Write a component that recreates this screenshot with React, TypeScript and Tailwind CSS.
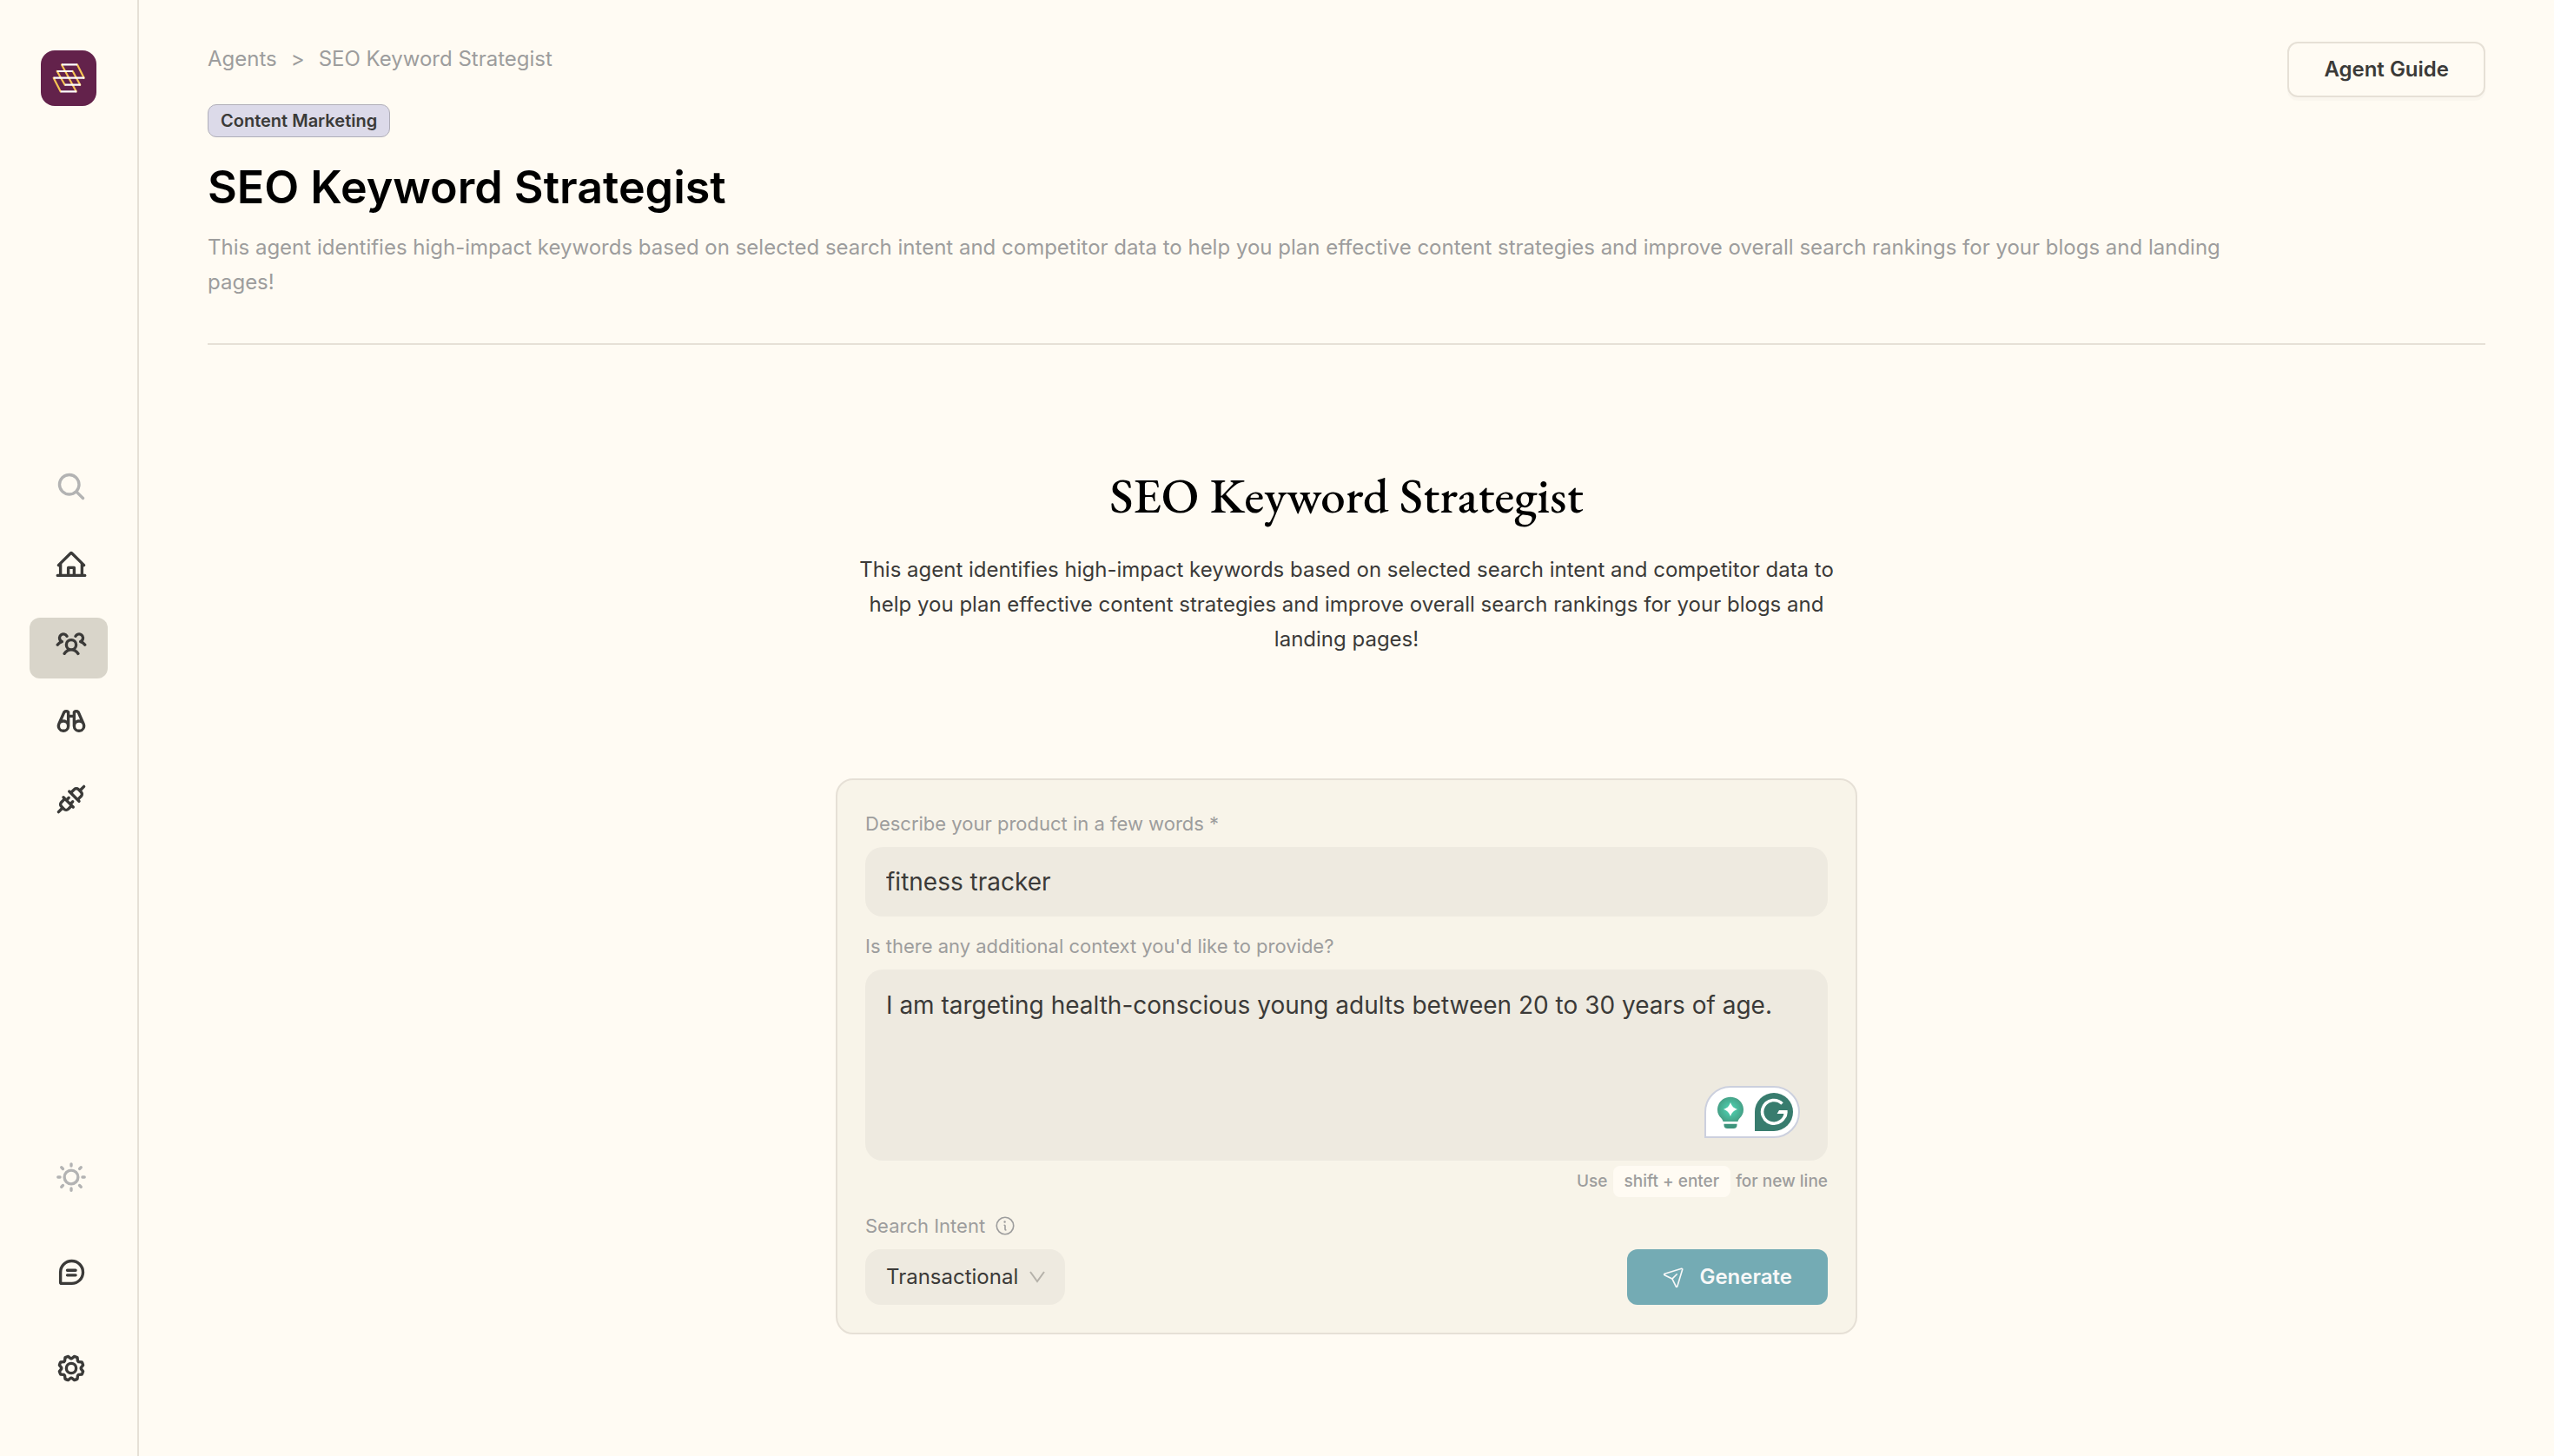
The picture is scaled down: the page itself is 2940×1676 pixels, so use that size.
import type { ReactNode } from "react";
import {
	PiBinocularsBold,
	PiChatTeardropTextBold,
	PiGearBold,
	PiHouseLineBold,
	PiInfo,
	PiMagnifyingGlassBold,
	PiPaperPlaneTilt,
	PiPlugsBold,
	PiSunBold,
	PiUsersThreeBold,
} from "react-icons/pi";

const description =
	"This agent identifies high-impact keywords based on selected search intent and competitor data to help you plan effective content strategies and improve overall search rankings for your blogs and landing pages!";

function Logo() {
	return (
		<svg viewBox="0 0 64 64" className="size-16 rounded-2xl bg-[#63224b]" fill="none" strokeWidth="2.2">
			<g stroke="#f6c453" strokeLinecap="round">
				<path d="M24 16.5 40.7 47.3M42 16.5l7.7 15.2M18.7 24l9 15.7M36.7 24l8.6 15.7M14.7 31.7l8 15.6" />
			</g>
			<g stroke="#ffffff">
				<path d="M24 16.3h18M18.7 24h18M14.7 31.7h35.5M27.7 39.7h18M22.7 47.3h18.5" />
			</g>
		</svg>
	);
}

function NavItem({ label, active, children }: { label: string; active?: boolean; children: ReactNode }) {
	return (
		<a
			href="#"
			aria-label={label}
			className={
				active
					? "flex h-[70px] w-[90px] items-center justify-center rounded-xl bg-[#d9d5ca] pb-3 pl-1.5 text-[#3b3a38]"
					: "flex h-[70px] w-[90px] items-center justify-center rounded-xl pb-3 pl-1.5 text-[#3b3a38]"
			}
		>
			{children}
		</a>
	);
}

function Sidebar() {
	return (
		<aside className="flex w-40 shrink-0 flex-col items-center justify-between border-r-2 border-[#e6e0d6] pt-[58px] pb-[60px]">
			<a href="#" aria-label="Home page">
				<Logo />
			</a>
			<nav className="flex flex-col gap-5 pt-11">
				<NavItem label="Search">
					<PiMagnifyingGlassBold size={36} className="text-[#b3b3b3]" />
				</NavItem>
				<NavItem label="Home">
					<PiHouseLineBold size={36} />
				</NavItem>
				<NavItem label="Agents" active>
					<PiUsersThreeBold size={36} />
				</NavItem>
				<NavItem label="Explore">
					<PiBinocularsBold size={36} />
				</NavItem>
				<NavItem label="Integrations">
					<PiPlugsBold size={36} />
				</NavItem>
			</nav>
			<div className="flex flex-col gap-10">
				<NavItem label="Theme">
					<PiSunBold size={36} className="text-[#b3b3b3]" />
				</NavItem>
				<NavItem label="Feedback">
					<PiChatTeardropTextBold size={36} />
				</NavItem>
				<NavItem label="Settings">
					<PiGearBold size={36} />
				</NavItem>
			</div>
		</aside>
	);
}

function PageHeader() {
	return (
		<header className="flex items-start justify-between gap-6 border-b-2 border-[#e6e0d6] pt-12 pb-[50px]">
			<div>
				<div className="flex h-10 items-center gap-4 text-2xl text-[#9d9d9d]">
					<a href="#">Agents</a>
					<span>&gt;</span>
					<span>SEO Keyword Strategist</span>
				</div>
				<span className="mt-8 inline-flex h-[38px] items-center rounded-[10px] border border-[#b0aeb8] bg-[#dcdae9] px-3.5 text-xl font-semibold text-[#3b3a38]">
					Content Marketing
				</span>
				<h1 className="mt-[26px] text-[52px] leading-[64px] font-semibold text-black">SEO Keyword Strategist</h1>
				<p className="mt-[17px] text-2xl leading-10 text-[#9d9d9d]">{description}</p>
			</div>
			<button
				type="button"
				className="h-16 shrink-0 rounded-xl border-2 border-[#e6e0d6] px-10 text-2xl font-semibold text-[#3b3a38] shadow-[0_4px_0_rgba(0,0,0,0.02)]"
			>
				Agent Guide
			</button>
		</header>
	);
}

function WritingAssistant() {
	return (
		<div className="absolute right-8 bottom-[26px] h-[60px] w-[110px] rounded-[30px] rounded-bl-none border-2 border-[#ccd0de] bg-white">
			<svg viewBox="2 2 106 56" className="h-full w-full" fill="none">
				<defs>
					<radialGradient id="bulb" cx="30" cy="27" r="17" gradientUnits="userSpaceOnUse">
						<stop offset="0.3" stopColor="#4bc5a6" />
						<stop offset="1" stopColor="#44987f" />
					</radialGradient>
				</defs>
				<path
					fill="url(#bulb)"
					d="M30 12.8c8.4 0 15 6.4 15 14.6 0 4.4-1.8 6.8-4 9.3-1.3 1.5-2 2.6-2.5 4.3h-17c-.5-1.7-1.2-2.8-2.5-4.3-2.2-2.5-4-4.9-4-9.3 0-8.2 6.6-14.6 15-14.6Z"
				/>
				<path fill="#fff" d="M30 19c1.6 4.5 3.6 6.5 8 8-4.4 1.5-6.4 3.5-8 8-1.6-4.5-3.6-6.5-8-8 4.4-1.5 6.4-3.5 8-8Z" />
				<path fill="#3d947c" d="M22.5 43.8h15v1.2c0 2.6-1.4 4-4 4h-7c-2.6 0-4-1.4-4-4v-1.2Z" />
				<path fill="#387c6e" d="M58 30a22 22 0 1 1 22 22H58V30Z" />
				<path stroke="#fff" strokeWidth="3.6" d="M89.5 20.4A13.4 13.4 0 1 0 93.4 30" />
				<path fill="#fff" d="M86 28h9.6c.3 3-.3 6.2-1.6 8.6l-3-1.2 1-3.4H83.6Z" />
			</svg>
		</div>
	);
}

function AgentForm() {
	return (
		<form className="mt-[140px] flex w-full max-w-[1176px] flex-col rounded-[20px] border-2 border-[#e6e0d6] bg-[#f8f4e9] p-8">
			<label htmlFor="product" className="mb-[9px] text-[22px] leading-9 text-[#9d9d9d]">
				Describe your product in a few words *
			</label>
			<input
				id="product"
				type="text"
				defaultValue="fitness tracker"
				className="h-20 rounded-[20px] bg-[#eeeae0] px-6 text-[28px] text-[#3b3a38] outline-none"
			/>
			<label htmlFor="context" className="mt-4 mb-[9px] text-[22px] leading-9 text-[#9d9d9d]">
				Is there any additional context you'd like to provide?
			</label>
			<div className="relative flex">
				<textarea
					id="context"
					defaultValue="I am targeting health-conscious young adults between 20 to 30 years of age."
					className="h-[220px] flex-1 resize-none rounded-[20px] bg-[#eeeae0] px-6 py-[21px] text-[28px] leading-10 text-[#3b3a38] outline-none"
				/>
				<WritingAssistant />
			</div>
			<div className="mt-1.5 flex items-center justify-end gap-1.5 text-[19px] leading-9 font-medium text-[#9d9d9d]">
				<span>Use</span>
				<kbd className="h-9 rounded-lg bg-[#fffbf3] px-[13px] font-[inherit]">shift + enter</kbd>
				<span>for new line</span>
			</div>
			<div className="mt-[15px] flex items-end justify-between">
				<div>
					<div className="mb-[9px] flex items-center gap-2.5 text-[22px] leading-9 text-[#9d9d9d]">
						<label htmlFor="intent">Search Intent</label>
						<PiInfo size={26} />
					</div>
					<div className="relative">
						<select
							id="intent"
							className="block h-16 w-[230px] appearance-none rounded-[18px] bg-[#eeeae0] px-6 text-2xl text-[#3b3a38] outline-none"
						>
							<option>Transactional</option>
							<option>Informational</option>
							<option>Commercial</option>
							<option>Navigational</option>
						</select>
						<svg
							viewBox="0 0 20 14"
							className="pointer-events-none absolute top-[25px] right-[22px] h-3.5 w-5"
							fill="none"
							stroke="#b5b2aa"
							strokeWidth="2"
						>
							<path d="m2 1 8 11 8-11" />
						</svg>
					</div>
				</div>
				<button
					type="submit"
					className="flex h-16 items-center gap-4 rounded-xl bg-[#74abb4] px-[41px] text-2xl font-semibold text-[#f8f8f8]"
				>
					<PiPaperPlaneTilt size={26} />
					Generate
				</button>
			</div>
		</form>
	);
}

export default function App() {
	return (
		<div className="flex min-h-screen bg-[#fffbf3] font-['Inter',sans-serif]">
			<Sidebar />
			<main className="min-w-0 flex-1 px-[79px]">
				<PageHeader />
				<section className="flex flex-col items-center pt-[137px]">
					<h2 className="font-['EB_Garamond','Liberation_Serif',serif] text-[57px] leading-[72px] font-medium text-black">
						SEO Keyword Strategist
					</h2>
					<p className="mt-[30px] max-w-[1160px] text-center text-2xl leading-10 text-[#3b3a38]">{description}</p>
					<AgentForm />
				</section>
			</main>
		</div>
	);
}
